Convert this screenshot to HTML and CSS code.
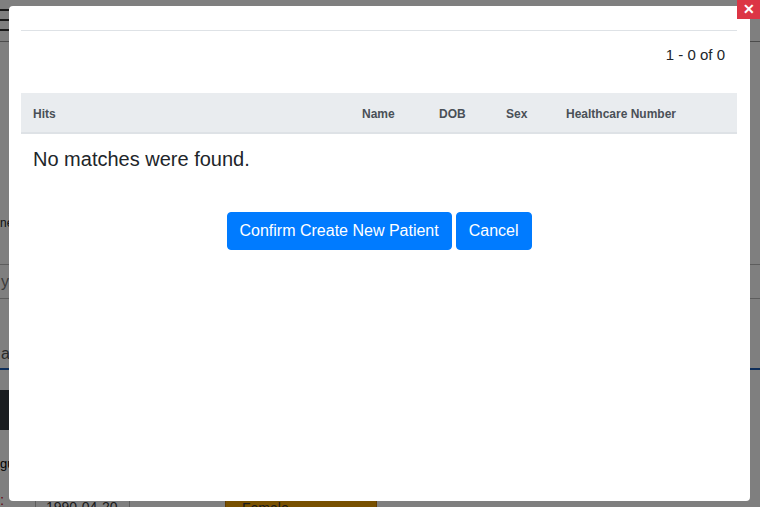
FILE: index.html
```html
<!DOCTYPE html>
<html>
<head>
<meta charset="utf-8">
<link rel="stylesheet" href="styles.css">
</head>
<body>
<div class="page">
  <div class="topbar">
    <div class="burger"><span></span><span></span><span></span></div>
  </div>
  <div class="field-label">ne</div>
  <div class="field-input">y</div>
  <div class="field-label2">a</div>
  <div class="tabline"></div>
  <div class="darkbtn"></div>
  <div class="lang">gu</div>
  <div class="req">:</div>
  <div class="inputs-row">
    <div class="dob">1990-04-20</div>
    <div class="sexsel">Female <span class="circ"></span></div>
  </div>
</div>
<div class="backdrop"></div>
<div class="modal">
  <div class="modal-body">
    <div class="rule"></div>
    <div class="pager">1 - 0 of 0</div>
    <div class="thead">
      <div class="th">Hits</div>
      <div class="th">Name</div>
      <div class="th">DOB</div>
      <div class="th">Sex</div>
      <div class="th">Healthcare Number</div>
    </div>
    <div class="empty">No matches were found.</div>
    <div class="actions">
      <button class="btn">Confirm Create New Patient</button>
      <button class="btn">Cancel</button>
    </div>
  </div>
</div>
<div class="close">&#x2715;</div>
</body>
</html>
```
FILE: styles.css
```css
html, body {
  margin: 0;
  padding: 0;
  width: 760px;
  height: 507px;
  overflow: hidden;
  font-family: "Liberation Sans", Arial, sans-serif;
  color: #212529;
  background: #fff;
}
.page {
  width: 760px;
  height: 507px;
  overflow: hidden;
}
.topbar {
  height: 42px;
  border-bottom: 1px solid #999;
  box-sizing: border-box;
}
.burger {
  margin-left: -12px;
  padding-top: 9px;
  width: 22px;
  display: flex;
  flex-direction: column;
  gap: 8px;
}
.burger span {
  display: block;
  height: 2px;
  background: #333;
}
.field-label {
  margin-top: 172px;
  font-size: 12px;
  line-height: 18px;
  color: #212529;
}
.field-input {
  margin-top: 32px;
  height: 33px;
  border-top: 1px solid #bbb;
  border-bottom: 1px solid #bbb;
  font-size: 16px;
  line-height: 33px;
  padding-left: 1px;
  color: #777;
}
.field-label2 {
  margin-top: 46px;
  font-size: 16px;
  line-height: 18px;
  height: 10px;
  padding-left: 1px;
  color: #555;
}
.tabline {
  margin-top: 13px;
  height: 2px;
  background: #1c5db5;
}
.darkbtn {
  margin-top: 20px;
  width: 49px;
  height: 40px;
  background: #343a40;
}
.lang {
  margin-top: 25px;
  font-size: 13px;
  line-height: 18px;
  color: #000;
}
.req {
  margin-top: 20px;
  font-size: 15px;
  line-height: 14px;
  color: #d0102c;
}
.inputs-row {
  display: flex;
  margin-top: -10px;
}
.dob {
  margin-left: 35px;
  width: 95px;
  height: 30px;
  box-sizing: border-box;
  border-left: 1px solid #bbb;
  border-right: 1px solid #bbb;
  font-size: 14px;
  line-height: 16px;
  padding: 2px 10px;
  color: #333;
}
.sexsel {
  margin-left: 95px;
  width: 152px;
  height: 30px;
  box-sizing: border-box;
  border: 1px solid #c77a00;
  background: #f0a000;
  font-size: 14px;
  line-height: 16px;
  padding: 2px 16px;
  color: #333;
}
.backdrop {
  position: fixed;
  inset: 0;
  background: rgba(0, 0, 0, 0.5);
}
.modal {
  position: absolute;
  left: 9px;
  top: 6px;
  width: 741px;
  height: 495px;
  background: #fff;
  border-radius: 4px;
}
.modal-body {
  padding: 24px 13px 0 12px;
}
.rule {
  height: 1px;
  background: #dee2e6;
}
.pager {
  margin-top: 13px;
  padding-right: 12px;
  text-align: right;
  font-size: 15px;
  line-height: 21px;
  color: #212529;
}
.thead {
  margin-top: 28px;
  display: grid;
  grid-template-columns: 329px 77px 67px 60px 1fr;
  background: #e9ecef;
  border-bottom: 2px solid #dee2e6;
  height: 41px;
  box-sizing: border-box;
}
.th {
  padding: 13px 12px 10px;
  font-size: 12px;
  line-height: 16px;
  font-weight: bold;
  color: #495057;
}
.empty {
  padding: 12px 12px;
  font-size: 20px;
  line-height: 27px;
  color: #212529;
}
.actions {
  margin-top: 27px;
  display: flex;
  justify-content: center;
  gap: 4px;
}
.btn {
  font-family: "Liberation Sans", Arial, sans-serif;
  font-size: 16px;
  line-height: 24px;
  padding: 6px 12px;
  border: 1px solid #007bff;
  background: #007bff;
  color: #fff;
  border-radius: 4px;
}
.close {
  position: absolute;
  right: 0;
  top: 0;
  width: 23px;
  height: 19px;
  background: #dc3545;
  color: #fff;
  font-size: 14px;
  font-weight: bold;
  line-height: 19px;
  text-align: center;
}
```
